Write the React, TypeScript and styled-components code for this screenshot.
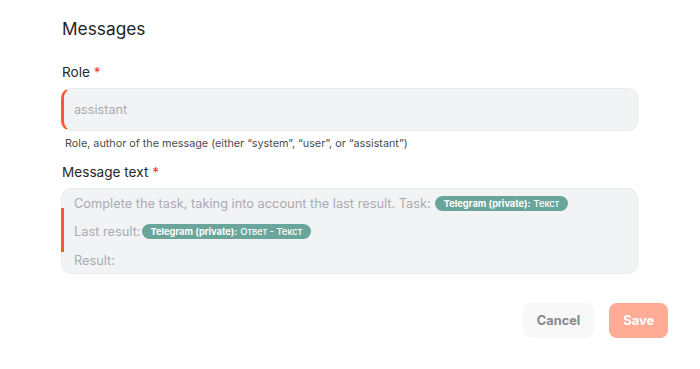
import React from "react";
import styled, { createGlobalStyle } from "styled-components";

const GlobalStyle = createGlobalStyle`
  body {
    margin: 0;
    background: #ffffff;
    font-family: Inter, "Noto Sans", sans-serif;
    color: #1f2023;
  }
`;

const Page = styled.div`
  padding: 17px 32px 0 61px;
`;

const Title = styled.h2`
  margin: 0 0 0 1px;
  font-size: 17.3px;
  line-height: 24px;
  font-weight: 400;
  color: #222326;
`;

const Field = styled.div`
  width: 577px;
  margin-top: ${props => props.$top}px;
`;

const Label = styled.div`
  margin-left: 1px;
  font-size: 13.6px;
  line-height: 18px;
  color: #27282b;
  margin-bottom: 7px;
`;

const Star = styled.span`
  color: #f0352b;
`;

const Input = styled.div`
  box-sizing: border-box;
  height: 43px;
  display: flex;
  align-items: center;
  padding-left: 10px;
  background: #f2f3f5;
  border: 1px solid #eaebed;
  border-left: 3px solid #fa5a2a;
  border-radius: 10px;
  font-size: 12.7px;
  color: #a9abb1;
`;

const Help = styled.div`
  margin: 6px 0 0 4px;
  font-size: 10.8px;
  line-height: 14px;
  color: #4b4d52;
`;

const TextBox = styled.div`
  position: relative;
  box-sizing: border-box;
  height: 86px;
  padding: 0 10px 0 12px;
  background: #f2f3f5;
  border: 1px solid #eaebed;
  border-radius: 10px;
  font-size: 12.8px;
  color: #a9abb1;
`;

const FocusBar = styled.span`
  position: absolute;
  left: -1px;
  top: 19px;
  width: 3px;
  height: 44px;
  background: #fa5a2a;
`;

const Line = styled.div`
  display: flex;
  align-items: center;
  height: 28.5px;
  white-space: nowrap;
`;

const Chip = styled.span`
  display: inline-flex;
  align-items: center;
  height: 15px;
  margin-left: ${props => props.$gap}px;
  padding: 0 9px;
  border-radius: 8px;
  background: #6aa59b;
  color: #ffffff;
  font-size: 9.3px;
  font-weight: 700;
`;

const ChipRest = styled.span`
  font-weight: 500;
  margin-left: 3px;
`;

const Footer = styled.div`
  display: flex;
  justify-content: flex-end;
  gap: 15px;
  margin-top: 29px;
`;

const Button = styled.button`
  height: 35px;
  padding: 0 14px;
  border: none;
  border-radius: 8px;
  font-family: Inter, "Noto Sans", sans-serif;
  font-size: 12.8px;
  font-weight: 700;
  background: ${props => (props.$primary ? "#ffab95" : "#f8f8f8")};
  color: ${props => (props.$primary ? "#ffffff" : "#86888c")};
`;

const App: React.FC = () => {
  return (
    <>
      <GlobalStyle />
      <Page>
        <Title>Messages</Title>
        <Field $top={22}>
          <Label>
            Role <Star>*</Star>
          </Label>
          <Input>assistant</Input>
          <Help>Role, author of the message (either “system”, “user”, or “assistant”)</Help>
        </Field>
        <Field $top={12}>
          <Label>
            Message text <Star>*</Star>
          </Label>
          <TextBox>
            <FocusBar />
            <Line>
              Complete the task, taking into account the last result. Task:
              <Chip $gap={4}>
                Telegram (private):<ChipRest>Текст</ChipRest>
              </Chip>
            </Line>
            <Line>
              Last result:
              <Chip $gap={1}>
                Telegram (private):<ChipRest>Ответ - Текст</ChipRest>
              </Chip>
            </Line>
            <Line>Result:</Line>
          </TextBox>
        </Field>
        <Footer>
          <Button>Cancel</Button>
          <Button $primary>Save</Button>
        </Footer>
      </Page>
    </>
  );
};

export default App;
